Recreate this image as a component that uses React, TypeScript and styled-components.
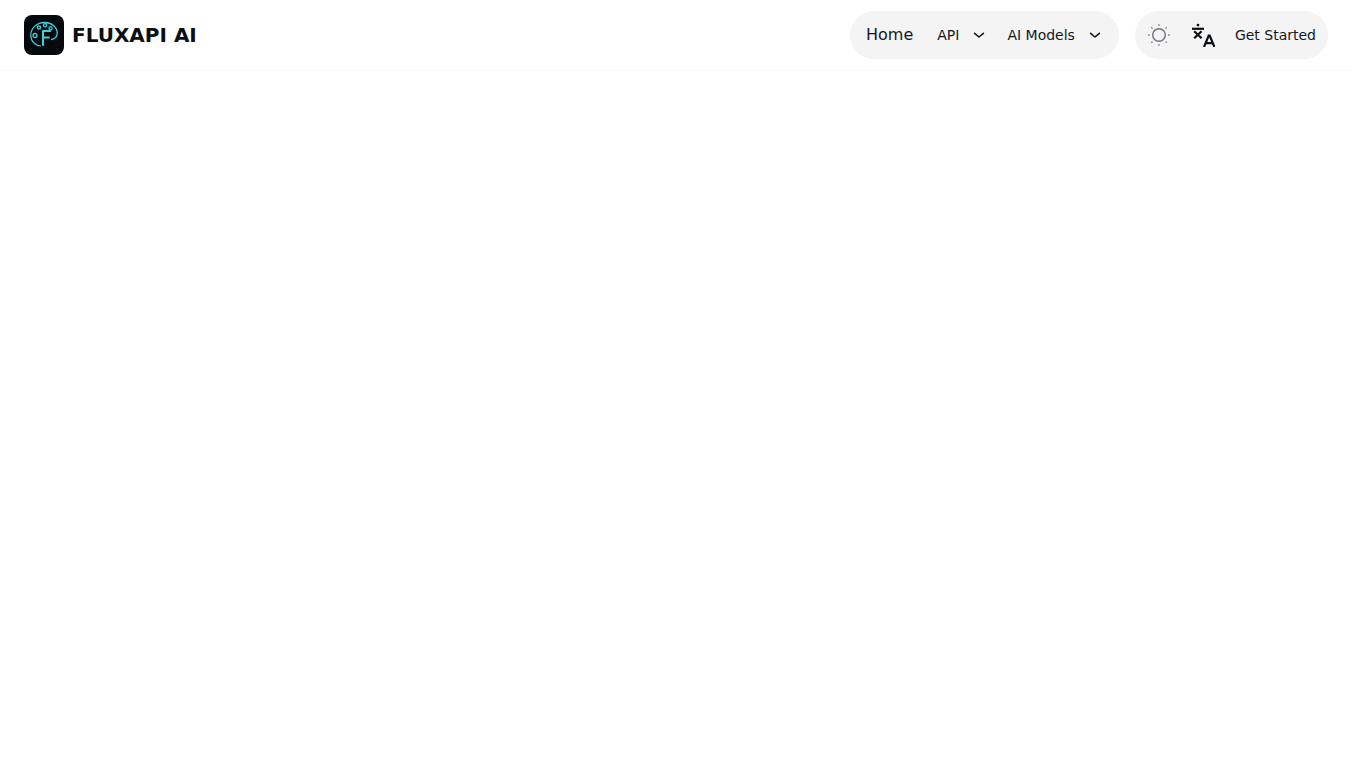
import React from 'react'
import styled, { createGlobalStyle } from 'styled-components'

const GlobalStyle = createGlobalStyle`
  html, body {
    margin: 0;
    padding: 0;
    background: #ffffff;
    font-family: "DejaVu Sans", sans-serif;
    color: #11181c;
  }
`

const Page = styled.div`
  min-height: 760px;
  background: #ffffff;
`

const Header = styled.header`
  height: 70px;
  padding: 0 24px;
  display: flex;
  align-items: center;
  justify-content: space-between;
  border-bottom: 1px solid #f6f6f7;
`

const Brand = styled.a`
  display: flex;
  align-items: center;
  gap: 8px;
`

const LogoBox = styled.div`
  width: 40px;
  height: 40px;
  border-radius: 8px;
  background: #05090d;
  display: flex;
  align-items: center;
  justify-content: center;
`

const BrandName = styled.span`
  font-size: 20px;
  font-weight: 700;
  line-height: 28px;
  color: #0b0f12;
`

const Actions = styled.div`
  display: flex;
  align-items: center;
  gap: 16px;
`

const Pill = styled.nav<{ $left: number; $right: number }>`
  height: 48px;
  box-sizing: border-box;
  padding: 0 ${(p) => p.$right}px 0 ${(p) => p.$left}px;
  display: flex;
  align-items: center;
  border-radius: 24px;
  background: #f4f4f5;
`

const HomeLink = styled.a`
  font-size: 16px;
  line-height: 24px;
  margin-right: 24px;
`

const MenuButton = styled.button<{ $gap: number }>`
  border: 0;
  padding: 0;
  margin: 0 ${(p) => p.$gap}px 0 0;
  background: transparent;
  display: flex;
  align-items: center;
  gap: 12px;
  font-family: inherit;
  font-size: 14px;
  line-height: 20px;
  color: #11181c;
`

const IconSlot = styled.span<{ $width: number }>`
  width: ${(p) => p.$width}px;
  display: flex;
  justify-content: center;
  align-items: center;
`

const StartedLink = styled.a`
  font-size: 14px;
  line-height: 20px;
`

function Chevron() {
  return (
    <svg width="16" height="16" viewBox="0 0 16 16" fill="none" stroke="#11181c" strokeWidth="1.600" strokeLinecap="round" strokeLinejoin="round">
      <path d="M3.600 6.300 8 10l4.400-3.700" />
    </svg>
  )
}

function Logo() {
  return (
    <svg width="40" height="40" viewBox="0 0 40 40" fill="none" stroke="#3fcdd6" strokeWidth="1.300" strokeLinecap="round" strokeLinejoin="round">
      <path d="M20.500 7.500C13 7.500 6.800 13 6.800 20c0 3.200 1.200 6 3.300 8 1.900 1.800 4.300 2.900 6.200 2.900" />
      <path d="M20.500 7.500c7 0 12.700 4.700 12.700 10.600 0 3.600-2.500 6-5.700 6.400" />
      <circle cx="11" cy="20.500" r="2" />
      <circle cx="15" cy="12.500" r="1.600" />
      <circle cx="21" cy="10.300" r="1.600" />
      <circle cx="26.500" cy="13.300" r="1.600" />
      <path strokeWidth="2.100" d="M19 30V16h7.200M19 22.500h5.800" />
    </svg>
  )
}

function SunIcon() {
  return (
    <svg width="24" height="24" viewBox="0 0 24 24" fill="none" stroke="#71717a" strokeLinecap="round">
      <circle cx="12" cy="12" r="6.300" strokeWidth="1.400" />
      <path strokeWidth="1.300" d="M12 1.700v.6M12 21.700v.6M1.700 12h.6M21.700 12h.6M4.700 4.700l.4.4M18.900 18.900l.4.4M4.700 19.300l.4-.4M18.900 5.100l.4-.4" />
    </svg>
  )
}

function TranslateIcon() {
  return (
    <svg width="24" height="24" viewBox="0 0 24 24" fill="none" stroke="#0b0f12" strokeWidth="2.200">
      <path d="M1 5.800h12" />
      <circle cx="7" cy="2.100" r="1.350" fill="#0b0f12" stroke="none" />
      <path d="m3.200 8.200 7.400 7M10.600 8.200l-7.400 7" />
      <path d="m13 24 4.700-11.500h1L23.400 24M14.700 20.200h7.200" />
    </svg>
  )
}

export default function App() {
  return (
    <Page>
      <GlobalStyle />
      <Header>
        <Brand>
          <LogoBox>
            <Logo />
          </LogoBox>
          <BrandName>FLUXAPI AI</BrandName>
        </Brand>
        <Actions>
          <Pill $left={16} $right={16}>
            <HomeLink>Home</HomeLink>
            <MenuButton $gap={20}>
              API
              <Chevron />
            </MenuButton>
            <MenuButton $gap={0}>
              AI Models
              <Chevron />
            </MenuButton>
          </Pill>
          <Pill $left={12} $right={12}>
            <IconSlot $width={24}>
              <SunIcon />
            </IconSlot>
            <IconSlot $width={64}>
              <TranslateIcon />
            </IconSlot>
            <StartedLink>Get Started</StartedLink>
          </Pill>
        </Actions>
      </Header>
    </Page>
  )
}
